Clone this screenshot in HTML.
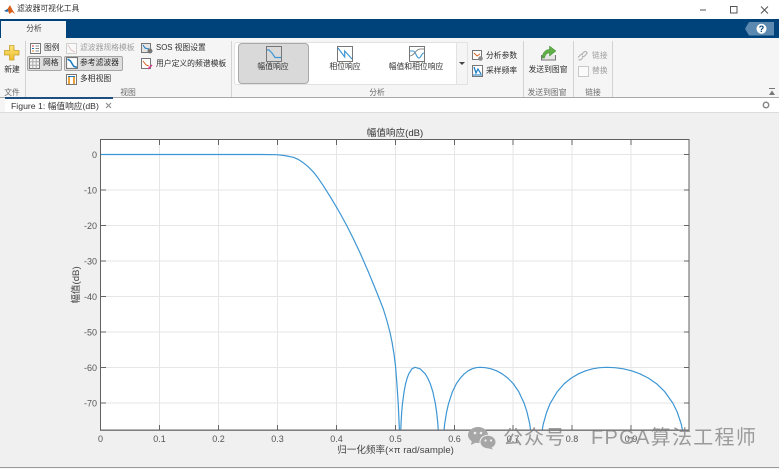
<!DOCTYPE html>
<html lang="zh"><head><meta charset="utf-8"><title>滤波器可视化工具</title>
<style>
html,body{margin:0;padding:0;width:779px;height:469px;overflow:hidden;background:#f0f0f0}
body{position:relative;font-family:"Liberation Sans","Noto Sans CJK SC",sans-serif;filter:blur(.3px)}
.a{position:absolute}
.t{position:absolute;white-space:nowrap;font-size:7.8px;line-height:10px;color:#2e2e2e}
.c{transform:translateX(-50%)}
.g{color:#a0a0a0}
.l{color:#6a6a6a}
.sep{position:absolute;top:41px;height:56px;width:1px;background:#d2d2d2}
.btn{position:absolute;background:#dedede;border:1px solid #a6a6a6;border-radius:2px;box-sizing:border-box}
svg{position:absolute;overflow:visible}
</style></head><body>

<!-- title bar -->
<div class="a" style="left:0;top:0;width:779px;height:19px;background:#fff"></div>
<svg style="left:4px;top:4px" width="11" height="11" viewBox="0 0 11 11"><path d="M0 7 L3.5 5 L6 1 L8 5 L11 10 L8 8 L5.5 10 L4 7 Z" fill="#d9601c"/><path d="M0 7 L3.5 5 L4.5 7 L3 8 Z" fill="#1f6fb5"/></svg>
<div class="t" style="left:17px;top:4px;color:#333">滤波器可视化工具</div>
<svg style="left:699px;top:5px" width="75" height="10" viewBox="0 0 75 10" fill="none" stroke="#555" stroke-width="1"><path d="M1 5H7"/><rect x="31.500" y="1.500" width="6.500" height="6.500"/><path d="M62 1.5L69 8.5M69 1.5L62 8.5"/></svg>

<!-- blue bar -->
<div class="a" style="left:0;top:19px;width:779px;height:19px;background:#00427a"></div>
<div class="a" style="left:1px;top:21px;width:65px;height:17px;background:#f5f5f5"></div>
<div class="t c" style="left:34px;top:24px;color:#444">分析</div>
<svg style="left:745px;top:22px" width="29" height="14" viewBox="0 0 29 14"><path d="M4 0H29V13.500H4L0 6.800Z" fill="#5c89b0"/><circle cx="16.500" cy="6.800" r="5" fill="#fff"/><text x="16.500" y="10" font-size="9" font-weight="bold" text-anchor="middle" fill="#00427a" font-family="Liberation Sans">?</text></svg>

<!-- ribbon -->
<div class="a" style="left:0;top:38px;width:779px;height:59px;background:#f5f5f5"></div>
<div class="a" style="left:0;top:97px;width:779px;height:1px;background:#a9a9a9"></div>
<div class="sep" style="left:25px"></div>
<div class="sep" style="left:231px"></div>
<div class="sep" style="left:523px"></div>
<div class="sep" style="left:573px"></div>
<div class="sep" style="left:612px"></div>

<!-- new -->
<svg style="left:4px;top:45px" width="16" height="16" viewBox="0 0 16 16"><defs><linearGradient id="y" x1="0" y1="0" x2="0" y2="1"><stop offset="0" stop-color="#fbe47a"/><stop offset="1" stop-color="#eebd2c"/></linearGradient></defs><path d="M5.500 .5H10V5.500H15V10H10V15H5.500V10H.5V5.500H5.500Z" fill="url(#y)" stroke="#c9a02a" stroke-width=".8"/></svg>
<div class="t c" style="left:12px;top:65px">新建</div>
<div class="t c l" style="left:12px;top:88px">文件</div>

<!-- view group -->
<div class="btn" style="left:27px;top:56px;width:35px;height:15px"></div>
<div class="btn" style="left:64px;top:56px;width:59px;height:15px"></div>
<svg style="left:30px;top:43px" width="11" height="11" viewBox="0 0 11 11"><rect x=".5" y=".5" width="10" height="10" fill="#fff" stroke="#777"/><path d="M2 3H4" stroke="#d33"/><path d="M2 5.500H4" stroke="#1a7ac0"/><path d="M2 8H4" stroke="#d88a1c"/><path d="M5.500 3H9M5.500 5.500H9M5.500 8H9" stroke="#888"/></svg>
<div class="t" style="left:44px;top:43px">图例</div>
<svg style="left:66px;top:43px;opacity:.4" width="11" height="11" viewBox="0 0 11 11"><rect x=".5" y=".5" width="10" height="10" fill="#fff" stroke="#999"/><path d="M2 2L5 7L9 9" fill="none" stroke="#c77"/></svg>
<div class="t g" style="left:80px;top:43px">滤波器规格模板</div>
<svg style="left:29px;top:58px" width="11" height="11" viewBox="0 0 11 11"><rect x=".5" y=".5" width="10" height="10" fill="#f4f4f4" stroke="#777"/><path d="M.5 3.800H10.500M.5 7.200H10.500M3.800 .5V10.500M7.200 .5V10.500" stroke="#aaa" fill="none"/></svg>
<div class="t" style="left:43px;top:58px">网格</div>
<svg style="left:66px;top:57px" width="12" height="12" viewBox="0 0 11 11"><rect x=".5" y=".5" width="10" height="10" fill="#fff" stroke="#777"/><path d="M1.500 2L4 3.500L7 8.500L10 9.500" fill="none" stroke="#1a7ac0" stroke-width="1.400"/></svg>
<div class="t" style="left:80px;top:58px">参考滤波器</div>
<svg style="left:66px;top:74px" width="11" height="11" viewBox="0 0 11 11"><rect x=".5" y=".5" width="10" height="10" fill="#fff" stroke="#777"/><path d="M2 10V3H4V10Z" fill="#e9a23b"/><path d="M7 10V3H9V10Z" fill="#e9a23b"/><path d="M2 2.500H9" stroke="#1a7ac0"/></svg>
<div class="t" style="left:80px;top:74px">多相视图</div>
<svg style="left:141px;top:42px" width="12" height="12" viewBox="0 0 12 12"><rect x=".5" y="1.500" width="9" height="9" fill="#e4e4e4" stroke="#777"/><path d="M2 3L4 6L8 7" fill="none" stroke="#1a7ac0"/><circle cx="9" cy="9" r="2.500" fill="#777"/></svg>
<div class="t" style="left:156px;top:43px">SOS 视图设置</div>
<svg style="left:141px;top:58px" width="12" height="12" viewBox="0 0 12 12"><rect x=".5" y=".5" width="9" height="10" fill="#fff" stroke="#777"/><path d="M2 3L5 7L8 8" fill="none" stroke="#d9601c"/><path d="M7 11L11 7" stroke="#d8388a" stroke-width="1.500"/></svg>
<div class="t" style="left:156px;top:59px">用户定义的频谱模板</div>
<div class="t c l" style="left:128px;top:88px">视图</div>

<!-- gallery -->
<div class="a" style="left:234px;top:42px;width:234px;height:43px;background:#fff;border:1px solid #e2e2e2;border-radius:3px;box-sizing:border-box"></div>
<div class="a" style="left:456px;top:42px;width:12px;height:43px;background:#f5f5f5;border:1px solid #e2e2e2;box-sizing:border-box"></div>
<svg style="left:459px;top:62px" width="6" height="4"><path d="M0 0H6L3 3Z" fill="#444"/></svg>
<div class="a" style="left:238px;top:43px;width:71px;height:41px;background:#d9d9d9;border:1px solid #a9a9a9;border-radius:4px;box-sizing:border-box"></div>
<svg style="left:266px;top:46px" width="16" height="16" viewBox="0 0 16 16" fill="none"><rect x=".5" y=".5" width="15" height="15" stroke="#777"/><path d="M1 4H3L6 7L9 11.500H15" stroke="#3d96d4" stroke-width="1.200"/></svg>
<div class="t c" style="left:273px;top:62px">幅值响应</div>
<svg style="left:337px;top:46px" width="16" height="16" viewBox="0 0 16 16" fill="none"><rect x=".5" y=".5" width="15" height="15" stroke="#777"/><path d="M1 2L7.700 11V5L15 13" stroke="#3d96d4" stroke-width="1.200"/></svg>
<div class="t c" style="left:345px;top:62px">相位响应</div>
<svg style="left:409px;top:46px" width="16" height="16" viewBox="0 0 16 16" fill="none"><rect x=".5" y=".5" width="15" height="15" stroke="#777"/><path d="M1 5H4C7 5 7 12 10 12C12 12 12.500 7 15 7" stroke="#3d96d4" stroke-width="1.100"/><path d="M1 10C5 10 7 3 11 3H15" stroke="#666" stroke-width=".8"/></svg>
<div class="t c" style="left:416px;top:62px">幅值和相位响应</div>
<div class="t c l" style="left:377px;top:88px">分析</div>
<svg style="left:472px;top:50px" width="11" height="11" viewBox="0 0 11 11"><rect x=".5" y=".5" width="9" height="9" fill="#fff" stroke="#777"/><path d="M2 3L5 6L8 4" fill="none" stroke="#d9601c"/><circle cx="8.500" cy="8.500" r="2.300" fill="#8a8a8a"/></svg>
<div class="t" style="left:486px;top:51px">分析参数</div>
<svg style="left:472px;top:65px" width="11" height="12" viewBox="0 0 11 12"><rect x=".5" y=".5" width="10" height="11" fill="#fff" stroke="#777"/><path d="M2 2L4 8L6 4L9 9" fill="none" stroke="#1a7ac0" stroke-width="1.200"/><path d="M1 10H10" stroke="#1a7ac0"/></svg>
<div class="t" style="left:486px;top:66px">采样频率</div>

<!-- send -->
<svg style="left:540px;top:44px" width="17" height="17" viewBox="0 0 17 17"><path d="M1.500 11V16H15.500V11" fill="#e6e6e6" stroke="#777"/><path d="M2 14C2.500 8 6 5.500 9.500 5.500V2L16 7L9.500 12V9C7 9 5 11 4.500 14Z" fill="#5fae47" stroke="#3f8a2e" stroke-width=".5"/></svg>
<div class="t c" style="left:548px;top:65px">发送到图窗</div>
<div class="t c l" style="left:547px;top:88px">发送到图窗</div>

<!-- link -->
<svg style="left:577px;top:50px" width="11" height="11" viewBox="0 0 11 11" fill="none" stroke="#b5b5b5" stroke-width="1.200"><path d="M1 7.500L4 4.500L6 4.500M10 3.500L7 6.500L5 6.500"/><path d="M4.500 4.500L7 2Q8.500 1 9.500 2T9.500 4M1.500 9.500Q2.500 10.500 4 9.500L6 7.500"/></svg>
<div class="t g" style="left:592px;top:51px">链接</div>
<div class="a" style="left:578px;top:66px;width:9px;height:9px;border:1px solid #c9c9c9;background:#fafafa"></div>
<div class="t g" style="left:592px;top:66px">替换</div>
<div class="t c l" style="left:593px;top:88px">链接</div>
<svg style="left:768px;top:88px" width="8" height="8" viewBox="0 0 8 8"><path d="M1 .5H7" stroke="#777"/><path d="M1 7L4 2.500L7 7Z" fill="#777"/></svg>

<!-- figure tab strip -->
<div class="a" style="left:0;top:98px;width:779px;height:14px;background:#fff"></div>
<div class="a" style="left:0;top:112px;width:779px;height:1px;background:#dcdcdc"></div>
<div class="a" style="left:0;top:98px;width:5px;height:14px;background:#f5f5f5"></div>
<div class="a" style="left:5px;top:97px;width:108px;height:2px;background:#1d4f80"></div>
<div class="t" style="left:11px;top:100px;font-size:8.700px;line-height:12px;color:#333">Figure 1: 幅值响应(dB)</div>
<svg style="left:105px;top:102px" width="7" height="7" viewBox="0 0 7 7"><path d="M1 1L6 6M6 1L1 6" stroke="#888"/></svg>
<svg style="left:762px;top:101px" width="8" height="8" viewBox="0 0 8 8"><circle cx="4" cy="4" r="2.700" fill="#fff" stroke="#888" stroke-width="1.500"/></svg>

<!-- plot -->
<svg style="left:0;top:0" width="779" height="469" viewBox="0 0 779 469">
<defs><clipPath id="ax"><rect x="100" y="140" width="589" height="290"/></clipPath></defs>
<rect x="100.500" y="139.500" width="588.500" height="290.500" fill="#fff"/>
<g stroke="#e6e6e6" stroke-width="1" fill="none">
<path d="M159.500 140V430M218.500 140V430M277.500 140V430M336.500 140V430M395.500 140V430M454.500 140V430M513 140V430M572 140V430M631 140V430"/>
<path d="M101 154.500H689M101 190H689M101 225.500H689M101 261H689M101 296.500H689M101 332H689M101 367.500H689M101 403H689"/>
</g>
<g stroke="#666" stroke-width="1" fill="none">
<path d="M159.500 140v5M218.500 140v5M277.500 140v5M336.500 140v5M395.500 140v5M454.500 140v5M513 140v5M572 140v5M631 140v5"/>
<path d="M159.500 430v-5M218.500 430v-5M277.500 430v-5M336.500 430v-5M395.500 430v-5M454.500 430v-5M513 430v-5M572 430v-5M631 430v-5"/>
<path d="M101 154.500h5M101 190h5M101 225.500h5M101 261h5M101 296.500h5M101 332h5M101 367.500h5M101 403h5"/>
<path d="M689 154.500h-5M689 190h-5M689 225.500h-5M689 261h-5M689 296.500h-5M689 332h-5M689 367.500h-5M689 403h-5"/>
</g>
<g clip-path="url(#ax)" fill="none" stroke="#3d96d4" stroke-width="1.200" stroke-linejoin="round">
<path d="M100.500 154.500L260 154.500L276.700 154.700L285 155.600L293.300 157.300L298 159.300L303.300 162.700L308 166.600L313.300 171.900L318 177.900L323.300 185.700L330 196.300L336 206.300L341 215L346.700 225.500L353 238L360 252.700L368.300 271.700L376 290.500L380 300.500L383.300 309L387 321L390 332.500L392 342L394 354L395.500 366L397 385L398.300 405L399.400 430L399.700 445"/>
<path d="M400.200 445.500L401 424.300L401.700 412L402.500 403.400L404.100 391.600L405.600 383.600L407.200 378L408.800 373.800L411.900 368.800L415 367.300L420.100 368.800L425.200 373.800L427.700 378L430.200 383.600L432.800 391.600L435.300 403.400L436.600 412L437.900 424.300L439.100 445.500"/>
<path d="M442.700 445.500L444.600 424.300L446.600 412L448.600 403.400L452.500 391.600L456.400 383.600L460.400 378L464.300 373.800L468.200 370.800L472.100 368.800L476 367.700L480 367.300L485.500 367.700L491.100 368.800L496.600 370.800L502.100 373.800L507.700 378L513.200 383.600L518.700 391.600L524.200 403.400L527 412L529.800 424.300L532.500 445.500"/>
<path d="M539.600 445.500L543.200 424.300L546.700 412L550.200 403.400L557.300 391.600L564.300 383.600L571.400 378L578.500 373.800L585.500 370.800L592.600 368.800L599.600 367.700L606.700 367.300L615 367.700L623.300 368.800L631.600 370.800L639.900 373.800L648.200 378L656.400 383.600L664.700 391.600L673 403.400L677.200 412L681.300 424.300L685.500 445.500"/>
</g>
<path d="M100.500 430V139.500H689V430Z" fill="none" stroke="#606060" stroke-width="1"/>
<path d="M100 430.300H689.500" stroke="#707070" stroke-width="1.200"/>
<g font-family="Liberation Sans,Noto Sans CJK SC,sans-serif" font-size="9" fill="#555" text-anchor="end">
<text x="97" y="158">0</text><text x="97" y="193.500">-10</text><text x="97" y="229">-20</text><text x="97" y="264.500">-30</text><text x="97" y="300">-40</text><text x="97" y="335.500">-50</text><text x="97" y="371">-60</text><text x="97" y="406.500">-70</text>
</g>
<g font-family="Liberation Sans,Noto Sans CJK SC,sans-serif" font-size="9" fill="#555" text-anchor="middle">
<text x="100.500" y="442">0</text><text x="159.500" y="442">0.1</text><text x="218.500" y="442">0.2</text><text x="277.500" y="442">0.3</text><text x="336.500" y="442">0.4</text><text x="395.500" y="442">0.5</text><text x="454.500" y="442">0.6</text><text x="513" y="442">0.7</text><text x="572" y="442">0.8</text><text x="631" y="442">0.9</text>
</g>
<text x="395" y="136" font-family="Liberation Sans,Noto Sans CJK SC,sans-serif" font-size="9.600" fill="#333" text-anchor="middle">幅值响应(dB)</text>
<text x="395.500" y="453" font-family="Liberation Sans,Noto Sans CJK SC,sans-serif" font-size="9.600" fill="#444" text-anchor="middle">归一化频率(×π  rad/sample)</text>
<text transform="translate(79 285) rotate(-90)" font-family="Liberation Sans,Noto Sans CJK SC,sans-serif" font-size="9.600" fill="#444" text-anchor="middle">幅值(dB)</text>
</svg>

<!-- watermark -->
<svg style="left:468px;top:427px" width="28" height="22" viewBox="0 0 28 22"><ellipse cx="10" cy="8" rx="10" ry="8" fill="#a6a6a6"/><path d="M4 13L3 18L9 15Z" fill="#a6a6a6"/><ellipse cx="20" cy="15" rx="8" ry="6.800" fill="#a6a6a6" stroke="#f0f0f0" stroke-width="1"/><path d="M23 20L25 22.500L19 21Z" fill="#a6a6a6"/><circle cx="7" cy="6" r="1.300" fill="#f0f0f0"/><circle cx="13" cy="6" r="1.300" fill="#f0f0f0"/><circle cx="17.500" cy="13.500" r="1.100" fill="#f0f0f0"/><circle cx="23" cy="13.500" r="1.100" fill="#f0f0f0"/></svg>
<div class="t" style="left:503px;top:426px;font-size:20px;line-height:24px;letter-spacing:1px;color:rgba(120,120,120,.72)">公众号</div>
<div class="t" style="left:591px;top:426px;font-size:20px;line-height:24px;letter-spacing:1.300px;color:rgba(120,120,120,.72)">FPGA算法工程师</div>

<div class="a" style="left:0;top:467px;width:779px;height:1px;background:#9a9a9a"></div>
<div class="a" style="left:0;top:468px;width:779px;height:1px;background:#f5f5f5"></div>
</body></html>
